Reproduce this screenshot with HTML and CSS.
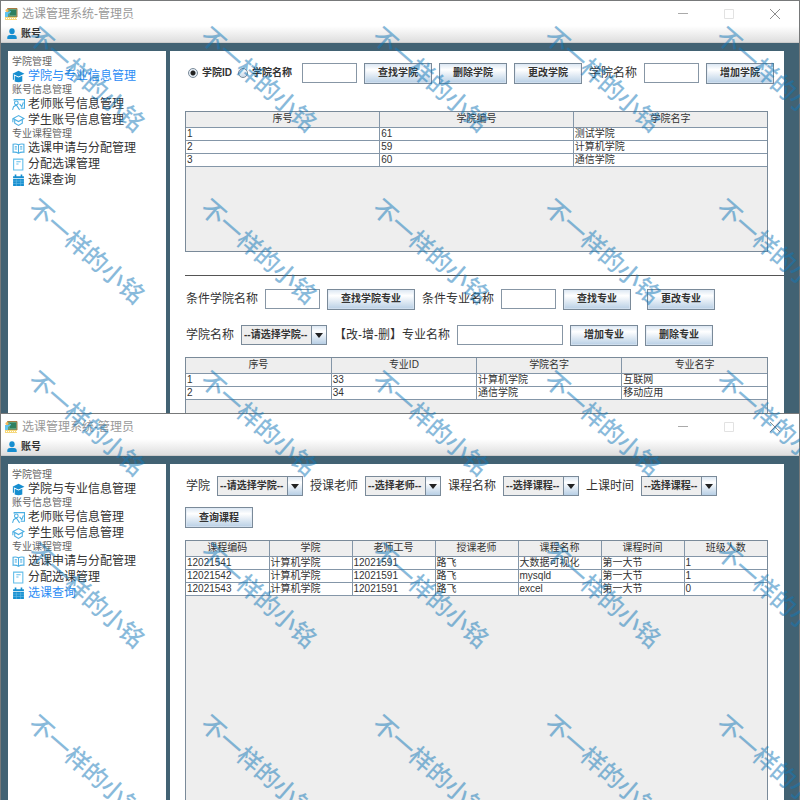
FILE: index.html
```
<!DOCTYPE html>
<html lang="zh-CN">
<head>
<meta charset="utf-8">
<meta name="viewport" content="width=device-width, initial-scale=1">
<title>选课管理系统-管理员</title>
<link rel="stylesheet" href="styles.css">
</head>
<body>
<svg class="sprite" aria-hidden="true">
  <symbol id="app" viewBox="0 0 13 13"><path fill="#5aa07c" stroke="#a77a42" d="M2.500 1.500h9.500v8.500h-9.500z"/><path fill="#2f8060" d="M5 3h6v5H5z"/><path fill="#62c4ee" d="M0 5h3l3-1v1L3 7v3H0z"/><circle cx="2" cy="3.500" r="1.500" fill="#f4b95c"/><path fill="#f6d87b" d="M0 10h12v3H0z"/><path stroke="#fff" stroke-dasharray="1 1" d="M1 11.500h11"/></symbol>
  <symbol id="user" viewBox="0 0 10 12"><ellipse cx="5" cy="3.200" rx="2.700" ry="3" fill="#168ed0"/><path fill="#168ed0" d="M.3 11V9.500Q.3 7 3 7h4q2.700 0 2.700 2.500V11z"/></symbol>
  <symbol id="cap" viewBox="0 0 12 12"><path fill="#168ed0" d="M6 .8 .5 3.500 6 6l5.500-2.500zM2.500 5.300 6 7l3.500-1.700V10.500Q6 12 2.500 10.500zM.8 4h1v5h-1z"/></symbol>
  <symbol id="teacher" viewBox="0 0 12 12"><path fill="none" stroke="#4aaee2" d="M2 2.500v-1h9.500v8H8M.5 11l1-3L4 6.500 7 11M7 5.500 9 8l1.500-4"/><circle cx="4" cy="4.500" r="1.700" fill="none" stroke="#4aaee2"/></symbol>
  <symbol id="student" viewBox="0 0 12 12"><path fill="none" stroke="#4aaee2" d="M6 1.500 1 4.200 6 7l5-2.800zM2.500 5.500v3L6 10.500l3.500-2v-3M.8 4.500v3"/></symbol>
  <symbol id="book" viewBox="0 0 12 12"><path fill="none" stroke="#4aaee2" d="M6 2.500Q4 1.500 1 2v7.500q3-.5 5 1 2-1.500 5-1V2Q8 1.500 6 2.500zm0 0v8M2.500 4.500h2m-2 2h2m3-2h2m-2 2h2"/></symbol>
  <symbol id="sheet" viewBox="0 0 12 12"><path fill="none" stroke="#62bde9" d="M1.500 1h8.500v10H1.500zM4 3.500h4M4 5.500h2"/></symbol>
  <symbol id="calendar" viewBox="0 0 12 12"><path fill="#168ed0" d="M1 2h1.500V.5H4V2h4V.5h1.500V2H11v2H1zM1 4.500h10V11H1z"/><path stroke="#67bce6" stroke-width=".6" d="M1 6.500h10M1 8.700h10M4 5v6m4-6v6"/></symbol>
  <symbol id="min" viewBox="0 0 12 12"><path stroke="#aaa" d="M1 5.500h10"/></symbol>
  <symbol id="max" viewBox="0 0 12 12"><path fill="none" stroke="#e2e2e2" d="M1.500 1.500h9v9h-9z"/></symbol>
  <symbol id="close" viewBox="0 0 12 12"><path stroke="#8d8d8d" d="m1 1 10 10M11 1 1 11"/></symbol>
</svg>

<section class="window">
  <header class="titlebar">
    <svg class="app-icon"><use href="#app"/></svg><h1>选课管理系统-管理员</h1>
    <div class="window-controls">
      <button type="button" aria-label="最小化"><svg><use href="#min"/></svg></button>
      <button type="button" aria-label="最大化"><svg><use href="#max"/></svg></button>
      <button type="button" aria-label="关闭"><svg><use href="#close"/></svg></button>
    </div>
  </header>
  <div class="menubar"><button type="button"><svg><use href="#user"/></svg>账号</button></div>
  <div class="workspace">
    <nav class="sidebar">
      <h2>学院管理</h2>
      <a href="#" class="current"><svg><use href="#cap"/></svg>学院与专业信息管理</a>
      <h2>账号信息管理</h2>
      <a href="#"><svg><use href="#teacher"/></svg>老师账号信息管理</a>
      <a href="#"><svg><use href="#student"/></svg>学生账号信息管理</a>
      <h2>专业课程管理</h2>
      <a href="#"><svg><use href="#book"/></svg>选课申请与分配管理</a>
      <a href="#"><svg><use href="#sheet"/></svg>分配选课管理</a>
      <a href="#"><svg><use href="#calendar"/></svg>选课查询</a>
    </nav>
    <main class="content">
      <div class="row">
        <div class="radios">
          <label><input type="radio" name="by" checked>学院ID</label>
          <label><input type="radio" name="by">学院名称</label>
        </div>
        <input class="field" type="text" aria-label="学院关键字">
        <button class="btn" type="button">查找学院</button>
        <button class="btn" type="button">删除学院</button>
        <button class="btn" type="button">更改学院</button>
        <label for="college-new">学院名称</label>
        <input class="field" type="text" id="college-new">
        <button class="btn" type="button">增加学院</button>
      </div>
      <div class="pane colleges">
        <table>
          <thead><tr><th>序号</th><th>学院编号</th><th>学院名字</th></tr></thead>
          <tbody>
            <tr><td>1</td><td>61</td><td>测试学院</td></tr>
            <tr><td>2</td><td>59</td><td>计算机学院</td></tr>
            <tr><td>3</td><td>60</td><td>通信学院</td></tr>
          </tbody>
        </table>
      </div>
      <hr>
      <div class="row">
        <label for="c-college">条件学院名称</label>
        <input class="field" type="text" id="c-college">
        <button class="btn" type="button">查找学院专业</button>
        <label for="c-major">条件专业名称</label>
        <input class="field" type="text" id="c-major">
        <button class="btn" type="button">查找专业</button>
        <button class="btn apart" type="button">更改专业</button>
      </div>
      <div class="row second">
        <label for="s-college">学院名称</label>
        <span class="combo wide"><select id="s-college"><option>--请选择学院--</option></select></span>
        <label for="major">【改-增-删】专业名称</label>
        <input class="field long" type="text" id="major">
        <button class="btn" type="button">增加专业</button>
        <button class="btn" type="button">删除专业</button>
      </div>
      <div class="pane majors">
        <table>
          <thead><tr><th>序号</th><th>专业ID</th><th>学院名字</th><th>专业名字</th></tr></thead>
          <tbody>
            <tr><td>1</td><td>33</td><td>计算机学院</td><td>互联网</td></tr>
            <tr><td>2</td><td>34</td><td>通信学院</td><td>移动应用</td></tr>
          </tbody>
        </table>
      </div>
    </main>
  </div>
</section>

<section class="window last">
  <header class="titlebar">
    <svg class="app-icon"><use href="#app"/></svg><h1>选课管理系统-管理员</h1>
    <div class="window-controls">
      <button type="button" aria-label="最小化"><svg><use href="#min"/></svg></button>
      <button type="button" aria-label="最大化"><svg><use href="#max"/></svg></button>
      <button type="button" aria-label="关闭"><svg><use href="#close"/></svg></button>
    </div>
  </header>
  <div class="menubar"><button type="button"><svg><use href="#user"/></svg>账号</button></div>
  <div class="workspace">
    <nav class="sidebar">
      <h2>学院管理</h2>
      <a href="#"><svg><use href="#cap"/></svg>学院与专业信息管理</a>
      <h2>账号信息管理</h2>
      <a href="#"><svg><use href="#teacher"/></svg>老师账号信息管理</a>
      <a href="#"><svg><use href="#student"/></svg>学生账号信息管理</a>
      <h2>专业课程管理</h2>
      <a href="#"><svg><use href="#book"/></svg>选课申请与分配管理</a>
      <a href="#"><svg><use href="#sheet"/></svg>分配选课管理</a>
      <a href="#" class="current"><svg><use href="#calendar"/></svg>选课查询</a>
    </nav>
    <main class="content">
      <div class="row">
        <label for="q-college">学院</label>
        <span class="combo wide"><select id="q-college"><option>--请选择学院--</option></select></span>
        <label for="q-teacher">授课老师</label>
        <span class="combo"><select id="q-teacher"><option>--选择老师--</option></select></span>
        <label for="q-course">课程名称</label>
        <span class="combo"><select id="q-course"><option>--选择课程--</option></select></span>
        <label for="q-time">上课时间</label>
        <span class="combo"><select id="q-time"><option>--选择课程--</option></select></span>
      </div>
      <div class="actions"><button class="btn" type="button">查询课程</button></div>
      <div class="pane courses">
        <table>
          <thead><tr><th>课程编码</th><th>学院</th><th>老师工号</th><th>授课老师</th><th>课程名称</th><th>课程时间</th><th>班级人数</th></tr></thead>
          <tbody>
            <tr><td>12021541</td><td>计算机学院</td><td>12021591</td><td>路飞</td><td>大数据可视化</td><td>第一大节</td><td>1</td></tr>
            <tr><td>12021542</td><td>计算机学院</td><td>12021591</td><td>路飞</td><td>mysqld</td><td>第一大节</td><td>1</td></tr>
            <tr><td>12021543</td><td>计算机学院</td><td>12021591</td><td>路飞</td><td>excel</td><td>第一大节</td><td>0</td></tr>
          </tbody>
        </table>
      </div>
    </main>
  </div>
</section>

<div class="watermark" aria-hidden="true">
  <span>不一样的小铭</span><span>不一样的小铭</span><span>不一样的小铭</span><span>不一样的小铭</span><span>不一样的小铭</span>
  <span>不一样的小铭</span><span>不一样的小铭</span><span>不一样的小铭</span><span>不一样的小铭</span><span>不一样的小铭</span>
  <span>不一样的小铭</span><span>不一样的小铭</span><span>不一样的小铭</span><span>不一样的小铭</span><span>不一样的小铭</span>
  <span>不一样的小铭</span><span>不一样的小铭</span><span>不一样的小铭</span><span>不一样的小铭</span><span>不一样的小铭</span>
  <span>不一样的小铭</span><span>不一样的小铭</span><span>不一样的小铭</span><span>不一样的小铭</span><span>不一样的小铭</span>
</div>
</body>
</html>
```
FILE: styles.css
```
* { box-sizing: border-box; }

body {
  position: relative;
  display: flex;
  flex-direction: column;
  min-height: 100vh;
  margin: 0;
  padding: 0 1px;
  overflow: hidden;
  background: #77797a;
  color: #333;
  font: 12px/16px "Liberation Sans", "Noto Sans CJK SC", sans-serif;
}

.sprite { display: none; }
button, input, select { font: inherit; color: inherit; }

.window {
  display: flex;
  flex-direction: column;
  margin-top: 1px;
  background: #fff;
}
.last { flex: 1; }

.titlebar { display: flex; align-items: center; height: 25px; padding-left: 4px; }
.app-icon { width: 13px; height: 13px; }
.titlebar h1 { margin: 0 auto 0 4px; color: #999; font-size: 12px; font-weight: 400; }
.window-controls { display: flex; gap: 22px; padding-right: 12px; }
.window-controls button { display: flex; padding: 0 6px; border: 0; background: none; }
.window-controls svg { width: 12px; height: 12px; }

.menubar {
  height: 17px;
  padding-left: 6px;
  border-bottom: 1px solid #ccc;
  background: linear-gradient(#fff, #dedede);
}
.menubar button {
  display: flex;
  align-items: center;
  gap: 4px;
  height: 16px;
  padding: 0;
  border: 0;
  background: none;
  font-size: 10px;
  font-weight: 700;
}
.menubar svg { width: 10px; height: 12px; }

.workspace {
  display: flex;
  flex: 1;
  gap: 4px;
  padding: 8px 15px 0 7px;
  background: #426273;
}

.sidebar { flex: none; width: 158px; padding: 5px 4px; background: #fff; }
.sidebar h2 { margin: 0; color: #666; font-size: 10px; font-weight: 400; line-height: 12px; }
.sidebar a { display: flex; align-items: center; gap: 3px; height: 16px; color: #333; text-decoration: none; }
.sidebar .current { color: #2b8cf5; }
.sidebar svg { width: 13px; height: 13px; }

.content {
  display: flex;
  flex: 1;
  flex-direction: column;
  min-width: 0;
  padding: 12px 0 0 15px;
  background: #fff;
}

.row { display: flex; align-items: center; gap: 7px; height: 20px; padding-left: 1px; white-space: nowrap; }
.second { margin-top: 16px; }
.actions { display: flex; margin-top: 11px; }

.radios { display: flex; gap: 6px; width: 109px; padding-left: 2px; font-size: 10px; font-weight: 700; }
.radios label { display: flex; align-items: center; gap: 4px; }
.radios input {
  width: 10px;
  height: 10px;
  margin: 0;
  border: 1px solid #7a8a99;
  border-radius: 50%;
  appearance: none;
  background: linear-gradient(#fff, #c9d9e9);
}
.radios input:checked { background: radial-gradient(circle, #222 0 2px, #e4edf5 3px); }

.field { width: 55px; height: 20px; padding: 0 3px; border: 1px solid #8796a5; background: #fff; }
.long { width: 106px; }

.btn {
  height: 21px;
  padding: 0 13px;
  border: 1px solid #7a8a99;
  background: linear-gradient(#dde8f3, #fff 30%, #b8cfe5);
  box-shadow: inset 0 0 0 1px #dde8f399;
  font-size: 10px;
  font-weight: 700;
  white-space: nowrap;
}
.apart { margin-left: 9px; }

.combo { position: relative; display: flex; width: 76px; height: 20px; }
.wide { width: 86px; }
.combo select {
  width: 100%;
  padding: 0 16px 0 2px;
  border: 1px solid #7a8a99;
  border-radius: 0;
  appearance: none;
  background: linear-gradient(#dde8f3, #fff 30%, #b8cfe5) right / 14px 100% no-repeat #eee;
  font-size: 10px;
  font-weight: 700;
}
.combo::before {
  content: "";
  position: absolute;
  top: 0;
  right: 15px;
  bottom: 0;
  border-left: 1px solid #7a8a99;
}
.combo::after {
  content: "";
  position: absolute;
  top: 8px;
  right: 4px;
  border: 4px solid transparent;
  border-top: 5px solid #222;
  border-bottom: 0;
  pointer-events: none;
}

.pane { margin-right: 16px; border: 1px solid #7a8a99; background: #eee; }
.colleges { height: 141px; margin-top: 28px; }
.majors { height: 56px; margin-top: 12px; border-bottom: 0; }
.courses { flex: 1; margin-top: 12px; border-bottom: 0; }

table { width: 100%; border-collapse: collapse; table-layout: fixed; background: #fff; font-size: 10px; line-height: 12px; }
th, td { height: 13px; padding: 0 1px; border: 1px solid #8496a8; white-space: nowrap; overflow: hidden; }
th { height: 15px; background: #eee; font-weight: 400; }
td { text-align: left; }
tr > :first-child { border-left: 0; }
tr > :last-child { border-right: 0; }
thead th { border-top: 0; }

hr { width: 100%; margin: 23px 0 13px; border: 0; border-top: 1px solid #555; }

.watermark {
  position: absolute;
  inset: -6px 0 0;
  display: grid;
  grid-template-columns: repeat(5, 172px);
  grid-auto-rows: 172px;
  place-items: center;
  overflow: hidden;
  pointer-events: none;
  color: #1378b8;
  font-size: 24px;
  font-weight: 500;
  line-height: 28px;
  opacity: .5;
}
.watermark span { transform: rotate(41deg); white-space: nowrap; }
```
